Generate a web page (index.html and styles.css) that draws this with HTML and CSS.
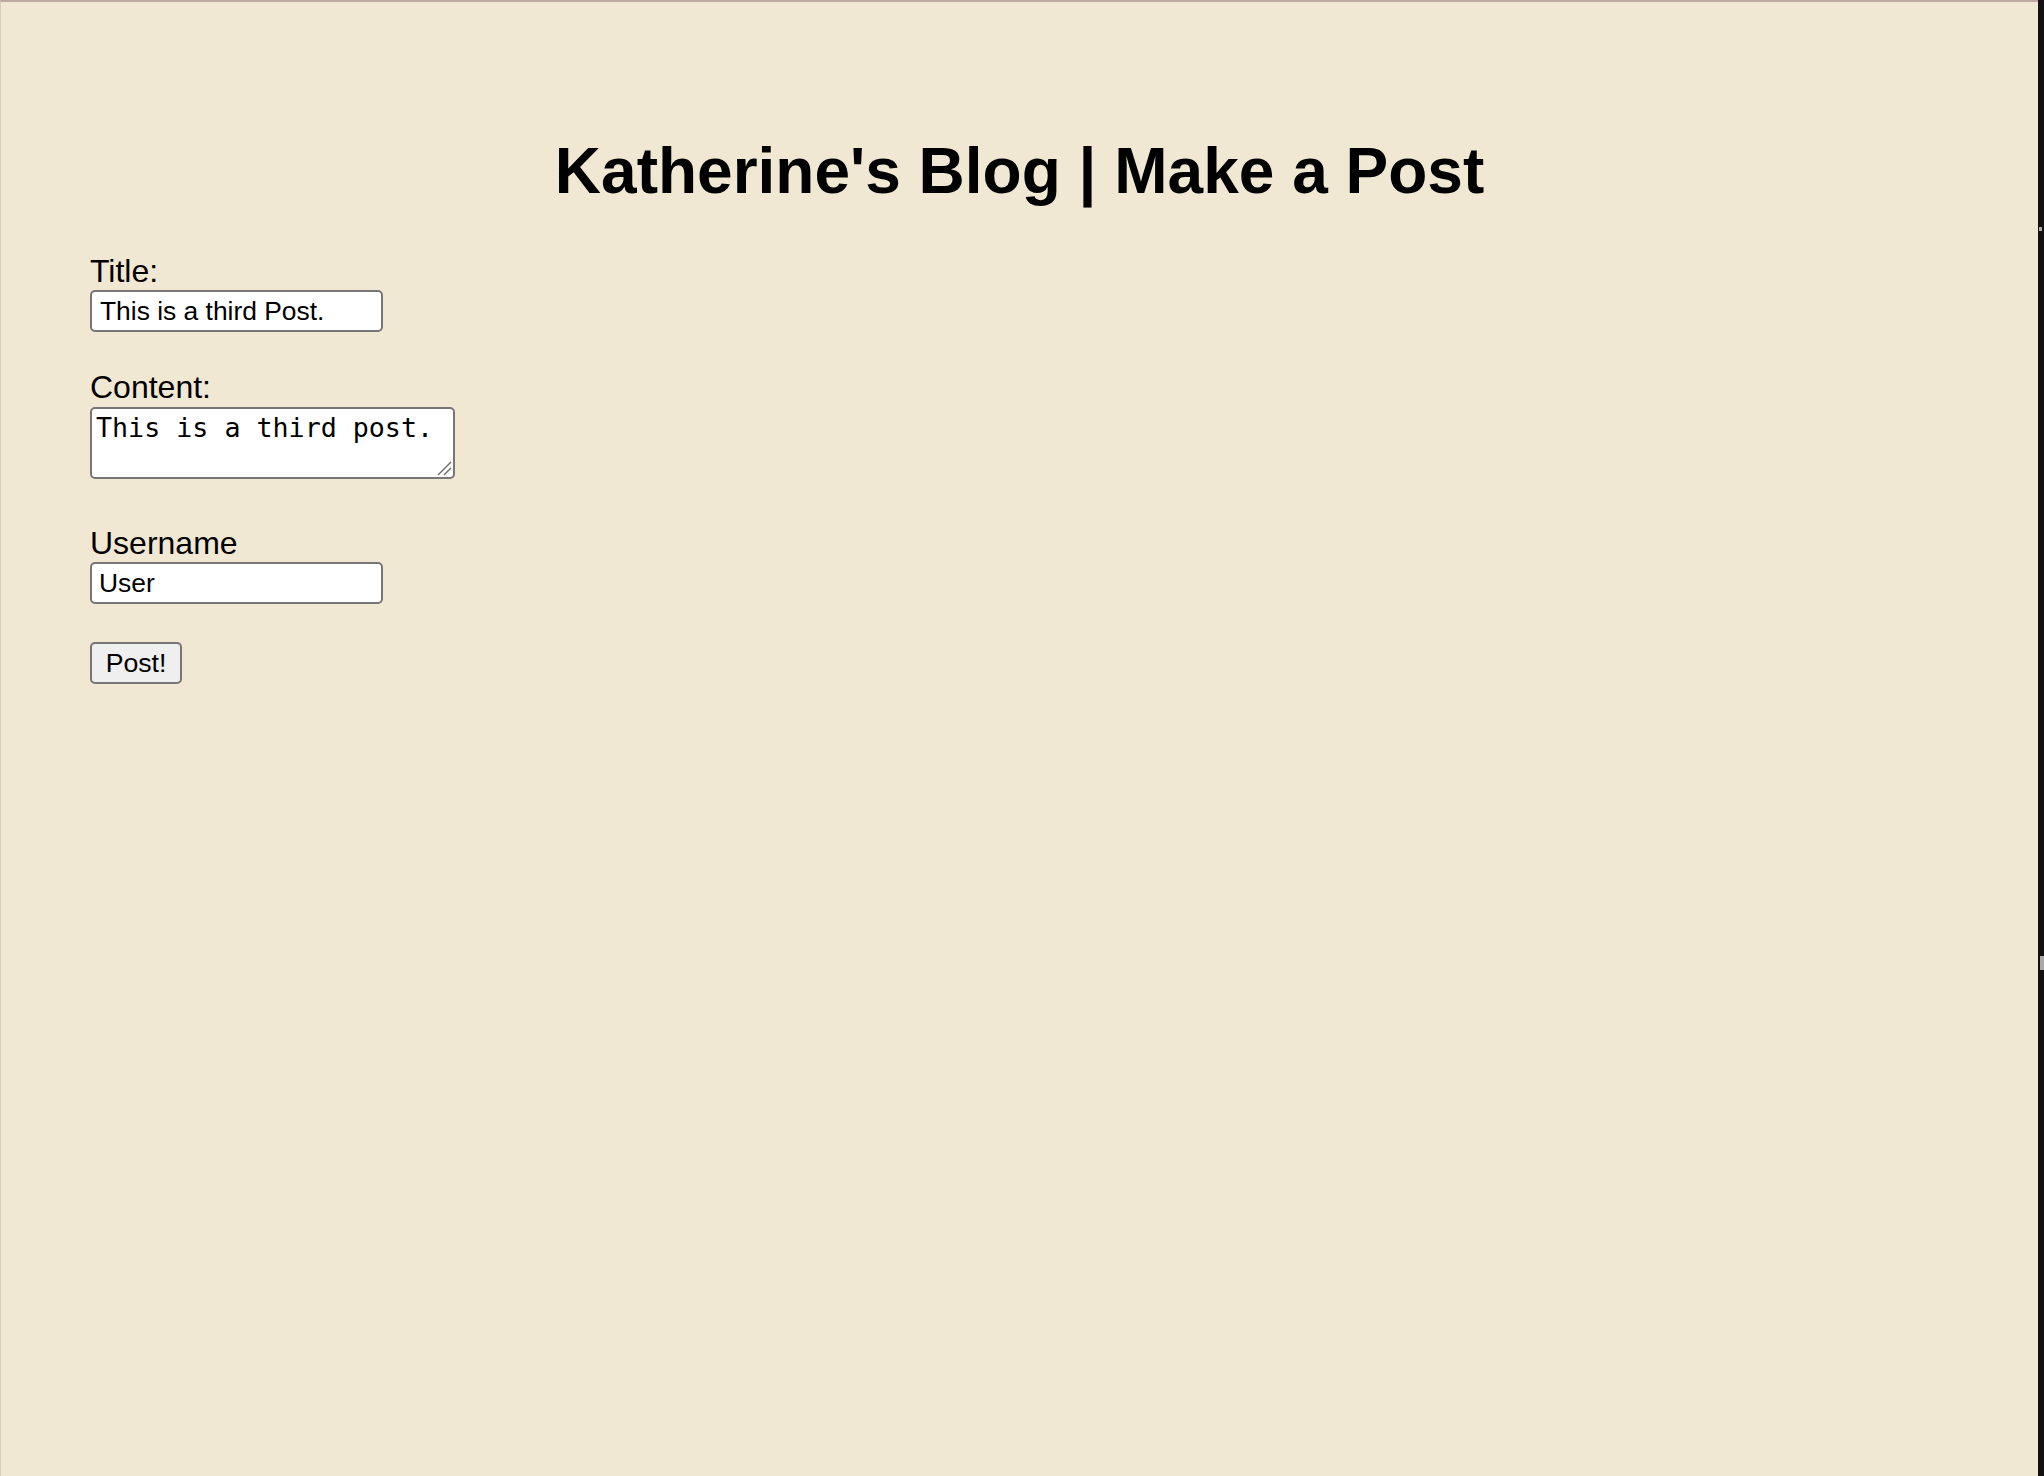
FILE: index.html
```html
<!DOCTYPE html>
<html lang="en">
<head>
<meta charset="utf-8">
<title>Katherine's Blog | Make a Post</title>
<link rel="stylesheet" href="styles.css">
</head>
<body>
<div class="window">
  <main class="page">
    <h1 class="page-title">Katherine's Blog | Make a Post</h1>
    <form class="post-form">
      <label class="field-label" for="title">Title:</label>
      <input class="text-input" id="title" type="text" value="This is a third Post.">

      <label class="field-label field-label--content" for="content">Content:</label>
      <div class="textarea-wrap">
        <textarea class="text-area" id="content">This is a third post.</textarea>
        <svg class="resize-grip" width="16" height="16" viewBox="0 0 16 16" aria-hidden="true">
          <line x1="15" y1="2" x2="2" y2="15" stroke="#6e6e6e" stroke-width="1.4"/>
          <line x1="15" y1="8" x2="8" y2="15" stroke="#6e6e6e" stroke-width="1.4"/>
        </svg>
      </div>

      <label class="field-label field-label--user" for="username">Username</label>
      <input class="text-input text-input--user" id="username" type="text" value="User">

      <button class="submit-btn" type="button">Post!</button>
    </form>
  </main>
  <div class="edge-strip">
    <span class="edge-mark edge-mark--top"></span>
    <span class="edge-mark edge-mark--mid"></span>
  </div>
</div>
</body>
</html>
```

FILE: styles.css
```css
html, body {
  margin: 0;
  padding: 0;
}

body {
  background: #f1e8d4;
  font-family: "Liberation Sans", Arial, sans-serif;
  color: #000;
}

.window {
  display: flex;
  min-height: 1476px;
}

.page {
  flex: 1;
  border-top: 2px solid #bea8a2;
  border-left: 1px solid #d6ccba;
  padding: 132px 0 0 89px;
  background: #f1e8d4;
}

.page-title {
  margin: 0 0 43px -89px;
  font-size: 64px;
  line-height: 74px;
  font-weight: bold;
  text-align: center;
}

.post-form {
  display: flex;
  flex-direction: column;
  align-items: flex-start;
}

.field-label {
  display: block;
  font-size: 32px;
  line-height: 37px;
  padding-top: 2px;
  margin-bottom: 0;
}

.field-label--content {
  margin-top: 35px;
  margin-bottom: 1px;
}

.field-label--user {
  margin-top: 44px;
}

.text-input {
  box-sizing: border-box;
  width: 293px;
  height: 42px;
  margin: 0;
  padding: 0 8px;
  border: 2px solid #767676;
  border-radius: 5px;
  background: #fff;
  font-family: "Liberation Sans", Arial, sans-serif;
  font-size: 26.4px;
  color: #000;
  outline: none;
}

.text-input--user {
  padding-left: 7px;
}

.textarea-wrap {
  position: relative;
  width: 365px;
  height: 72px;
}

.text-area {
  box-sizing: border-box;
  display: block;
  width: 365px;
  height: 72px;
  margin: 0;
  padding: 3px 4px;
  border: 2px solid #767676;
  border-radius: 5px;
  background: #fff;
  font-family: "DejaVu Sans Mono", Menlo, monospace;
  font-size: 26.67px;
  color: #000;
  resize: none;
  overflow: hidden;
  outline: none;
}

.resize-grip {
  position: absolute;
  right: 3px;
  bottom: 3px;
}

.submit-btn {
  box-sizing: border-box;
  margin-top: 38px;
  width: 92px;
  height: 42px;
  padding: 0;
  border: 2px solid #767676;
  border-radius: 5px;
  background: #efefef;
  font-family: "Liberation Sans", Arial, sans-serif;
  font-size: 26.67px;
  color: #000;
}

.edge-strip {
  width: 6px;
  background: #111;
  display: flex;
  flex-direction: column;
  align-items: flex-end;
}

.edge-mark {
  display: block;
  background: #a9a9a9;
}

.edge-mark--top {
  margin-top: 227px;
  width: 3px;
  height: 4px;
  margin-right: 2px;
}

.edge-mark--mid {
  margin-top: 725px;
  width: 4px;
  height: 14px;
}
```
